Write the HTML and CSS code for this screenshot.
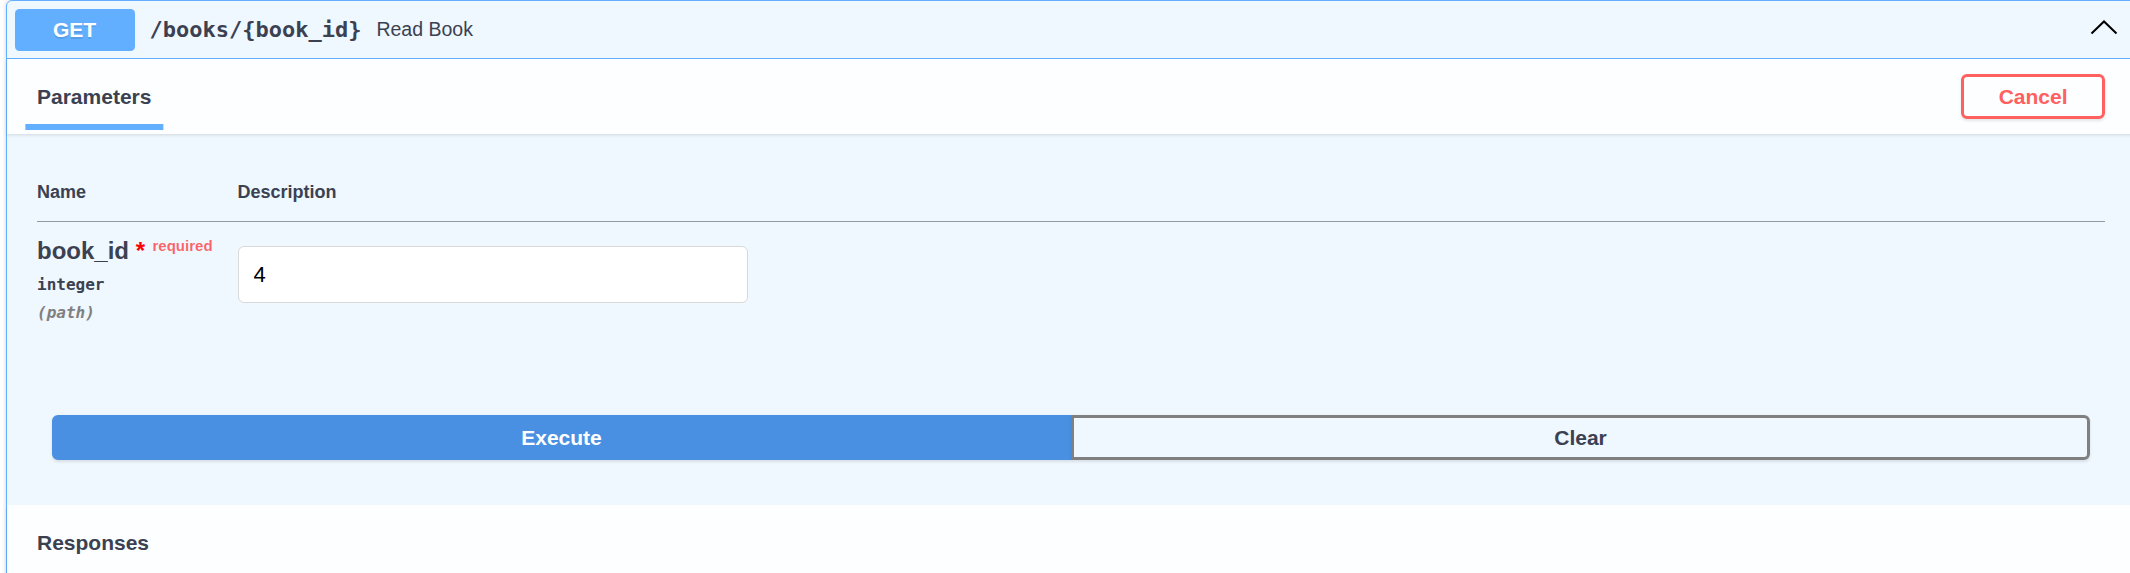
FILE: index.html
```html
<!DOCTYPE html>
<html lang="en">
<head>
<meta charset="utf-8">
<title>Read Book</title>
<link rel="stylesheet" href="styles.css">
</head>
<body>
<div class="opblock">
  <div class="summary">
    <span class="method">GET</span>
    <span class="path">/books/{book_id}</span>
    <span class="desc">Read Book</span>
    <svg class="arrow" width="28" height="15" viewBox="0 0 28 15" aria-hidden="true"><polyline points="1.5,13.5 14,1.5 26.5,13.5" fill="none" stroke="#000" stroke-width="2"/></svg>
  </div>
  <div class="body">
    <div class="section-header">
      <div class="tab-header"><h4 class="tab-title"><span class="tab-active">Parameters</span></h4></div>
      <button class="btn cancel">Cancel</button>
    </div>
    <div class="table-container">
      <table class="parameters">
        <thead>
          <tr><th class="col-name">Name</th><th class="col-desc">Description</th></tr>
        </thead>
        <tbody>
          <tr>
            <td class="col-name">
              <div class="param-name">book_id<span class="star">&nbsp;*</span><span class="req">required</span></div>
              <div class="param-type">integer</div>
              <div class="param-in">(path)</div>
            </td>
            <td class="col-desc"><input class="param-input" type="text" value="4"></td>
          </tr>
        </tbody>
      </table>
    </div>
    <div class="btn-group">
      <button class="btn execute">Execute</button>
      <button class="btn clear">Clear</button>
    </div>
    <div class="section-header responses">
      <h4 class="tab-title">Responses</h4>
    </div>
  </div>
</div>
</body>
</html>
```
FILE: styles.css
```css
html, body {
  margin: 0;
  padding: 0;
  background: #ffffff;
  overflow: hidden;
}
body {
  font-family: "Liberation Sans", Arial, sans-serif;
  color: #3b4151;
}
.opblock {
  box-sizing: border-box;
  width: 2130px;
  margin-left: 6px;
  border: 1.5px solid #61affe;
  border-radius: 6px;
  background: rgba(97, 175, 254, 0.1);
  box-shadow: 0 0 4.5px rgba(0, 0, 0, 0.19);
}
.summary {
  display: flex;
  align-items: center;
  padding: 7.5px;
  border-bottom: 1.5px solid #61affe;
}
.method {
  background: #61affe;
  border-radius: 4.5px;
  color: #ffffff;
  font-size: 21px;
  font-weight: 700;
  min-width: 120px;
  padding: 9px 0;
  text-align: center;
  text-shadow: 0 1.5px 0 rgba(0, 0, 0, 0.1);
}
.path {
  font-family: "DejaVu Sans Mono", "Liberation Mono", monospace;
  font-size: 22px;
  font-weight: 700;
  color: #3b4151;
  padding: 0 15px;
}
.desc {
  flex: 1 1 auto;
  font-size: 19.5px;
  color: #3b4151;
}
.arrow {
  display: block;
  margin-right: 10px;
  margin-bottom: 5px;
}
.section-header {
  box-sizing: border-box;
  display: flex;
  align-items: center;
  min-height: 75px;
  padding: 12px 30px;
  background: rgba(255, 255, 255, 0.8);
  box-shadow: 0 1.5px 3px rgba(0, 0, 0, 0.1);
}
.tab-header {
  display: flex;
  flex: 1;
}
.tab-title {
  margin: 0;
  font-size: 21px;
  font-weight: 700;
  color: #3b4151;
}
.tab-active {
  position: relative;
}
.tab-active::after {
  content: "";
  position: absolute;
  left: 50%;
  bottom: -22.5px;
  width: 120%;
  height: 6px;
  transform: translateX(-50%);
  background: #61affe;
}
.btn {
  font-family: "Liberation Sans", Arial, sans-serif;
  font-size: 21px;
  font-weight: 700;
  line-height: normal;
  padding: 7.5px 34.5px;
  border: 3px solid #808080;
  border-radius: 6px;
  background: transparent;
  box-shadow: 0 1.5px 3px rgba(0, 0, 0, 0.1);
  color: #3b4151;
}
.cancel {
  border-color: #ff6060;
  color: #ff6060;
}
.table-container {
  padding: 30px;
}
.parameters {
  width: 100%;
  border-collapse: collapse;
}
.parameters th {
  padding: 18px 0;
  text-align: left;
  font-size: 18px;
  font-weight: 700;
  color: #3b4151;
  border-bottom: 1.5px solid rgba(59, 65, 81, 0.3);
}
.parameters th.col-name,
.parameters td.col-name {
  width: 200.5px;
}
.parameters td {
  padding: 15px 0;
  vertical-align: top;
}
.param-name {
  font-size: 24px;
  font-weight: 700;
  color: #3b4151;
}
.star {
  color: #ff0000;
}
.req {
  position: relative;
  top: -9px;
  padding: 7.5px;
  font-size: 15px;
  color: rgba(255, 0, 0, 0.6);
}
.param-type {
  font-family: "DejaVu Sans Mono", "Liberation Mono", monospace;
  font-size: 16px;
  font-weight: 700;
  line-height: 21px;
  padding: 8.5px 0 6.5px;
  color: #3b4151;
}
.param-in {
  font-family: "DejaVu Sans Mono", "Liberation Mono", monospace;
  font-size: 16px;
  font-weight: 700;
  font-style: italic;
  line-height: 24px;
  color: #808080;
}
.param-input {
  display: block;
  box-sizing: border-box;
  width: 510px;
  height: 57px;
  margin: 9px 0 7.5px;
  padding: 12px 15px;
  border: 1.5px solid #d9d9d9;
  border-radius: 6px;
  background: #ffffff;
  font-family: "Liberation Sans", Arial, sans-serif;
  font-size: 22px;
  line-height: 30px;
  color: #000000;
}
.btn-group {
  display: flex;
  padding: 45px;
}
.btn-group .btn {
  flex: 1;
}
.execute {
  background: #4990e2;
  border-color: #4990e2;
  color: #ffffff;
  border-radius: 6px 0 0 6px;
}
.clear {
  border-radius: 0 6px 6px 0;
}
```
